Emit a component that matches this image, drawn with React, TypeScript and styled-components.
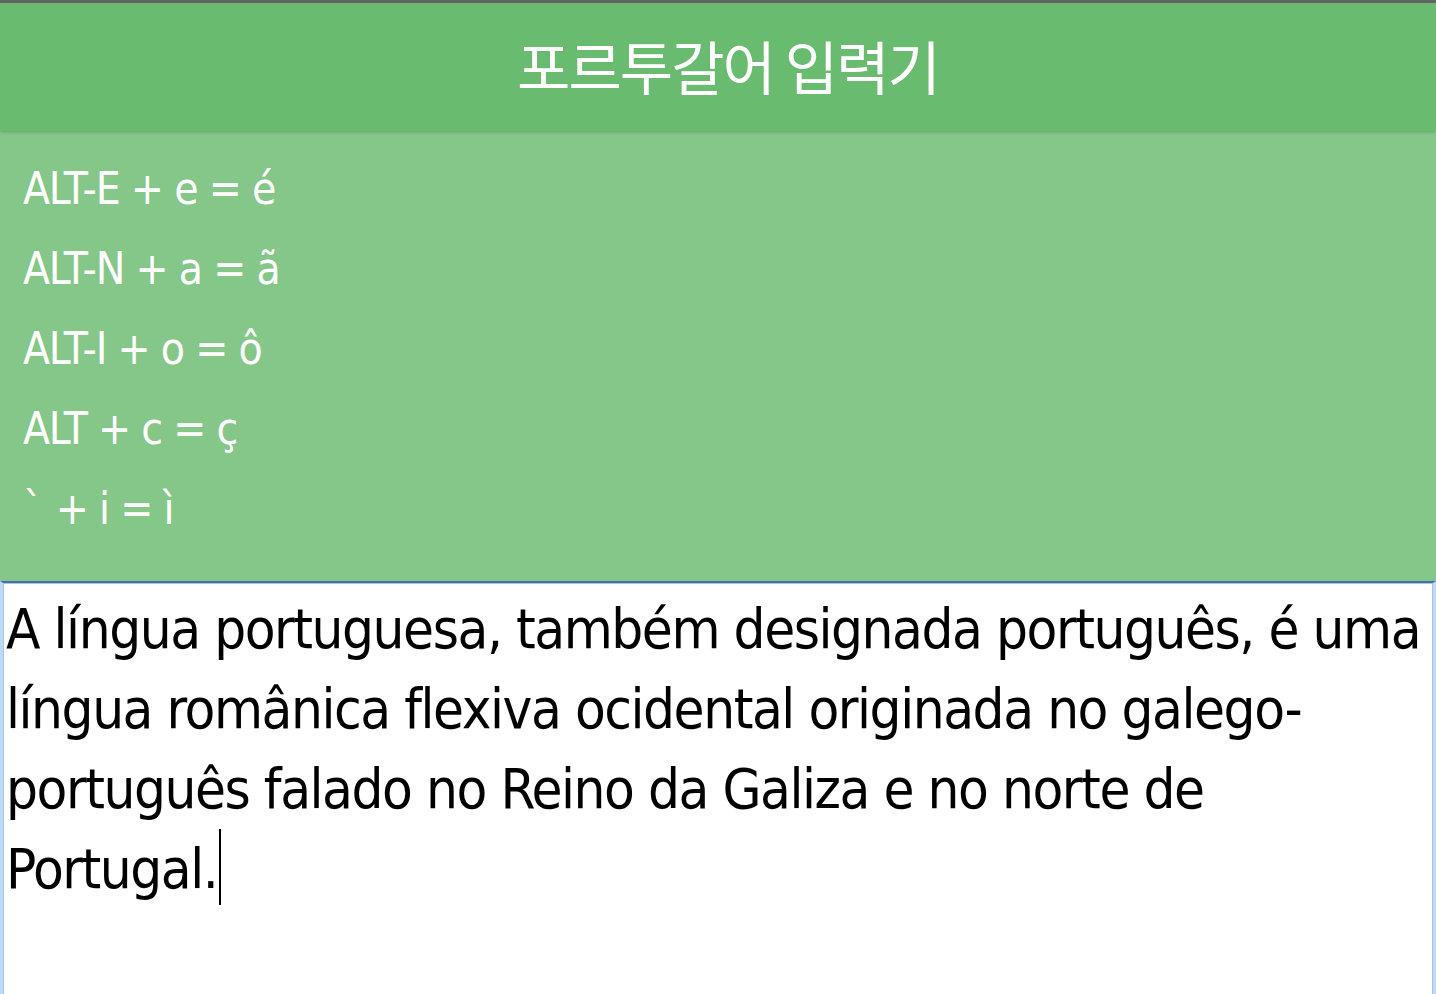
import React from "react";
import styled, { createGlobalStyle } from "styled-components";

const GlobalStyle = createGlobalStyle`
  html, body {
    margin: 0;
    padding: 0;
    background: #ffffff;
    overflow: hidden;
  }
  * { box-sizing: border-box; }
`;

const narrow = `"Liberation Sans Narrow", "DejaVu Sans Condensed", "Roboto Condensed", Roboto, sans-serif`;

const Page = styled.div`
  display: flex;
  flex-direction: column;
  width: 1436px;
  height: 994px;
  overflow: hidden;
`;

const TopStrip = styled.div`
  height: 3px;
  background: #646464;
  flex: none;
`;

const Header = styled.header`
  height: 128px;
  flex: none;
  background: #69bb6f;
  display: flex;
  align-items: center;
  justify-content: center;
  box-shadow: 0 1px 3px rgba(40, 90, 45, 0.35);
  position: relative;
  z-index: 1;
`;

const Title = styled.h1`
  margin: 0;
  color: #ffffff;
  font-family: "Noto Sans CJK KR", "Noto Sans", sans-serif;
  font-weight: 400;
  font-size: 58px;
  line-height: 1;
  padding-left: 20px;
  padding-bottom: 4px;
  letter-spacing: -2px;
`;

const Help = styled.section`
  flex: none;
  height: 450px;
  background: #85c788;
  padding: 18px 23px 0;
  display: flex;
  flex-direction: column;
`;

const HelpLine = styled.p`
  margin: 0;
  color: #ffffff;
  font-family: ${narrow};
  font-size: 44px;
  line-height: 80px;
  letter-spacing: -1.2px;
  white-space: pre;
`;

const Editor = styled.div`
  flex: 1;
  border-top: 2px solid #4471a6;
  border-left: 3px solid #bfdaf7;
  border-right: 3px solid #bfdaf7;
  box-shadow: inset 1px 1px 0 #a8c4e4, inset -1px 0 0 #a8c4e4;
  background: #ffffff;
  padding: 6px 8px 0 3px;
  color: #000000;
  font-family: ${narrow};
  font-size: 56px;
  letter-spacing: -1.45px;
  line-height: 80px;
  word-wrap: break-word;
`;

const NoBreak = styled.span`
  white-space: nowrap;
`;

const Caret = styled.span`
  display: inline-block;
  width: 0;
  height: 76px;
  border-left: 2px solid #000000;
  vertical-align: -17px;
  margin-left: 2px;
`;

const lines = [
  "ALT-E + e = é",
  "ALT-N + a = ã",
  "ALT-I + o = ô",
  "ALT + c = ç",
  "`\u200A + i = ì",
];

export default function App() {
  return (
    <>
      <GlobalStyle />
      <Page>
        <TopStrip />
        <Header>
          <Title>포르투갈어 입력기</Title>
        </Header>
        <Help>
          {lines.map((l) => (
            <HelpLine key={l}>{l}</HelpLine>
          ))}
        </Help>
        <Editor role="textbox" aria-multiline="true">
          A língua portuguesa, também designada português, é uma língua românica flexiva ocidental originada no galego-português falado no Reino da Galiza e no norte de{" "}
          <NoBreak>
            Portugal.
            <Caret />
          </NoBreak>
        </Editor>
      </Page>
    </>
  );
}
